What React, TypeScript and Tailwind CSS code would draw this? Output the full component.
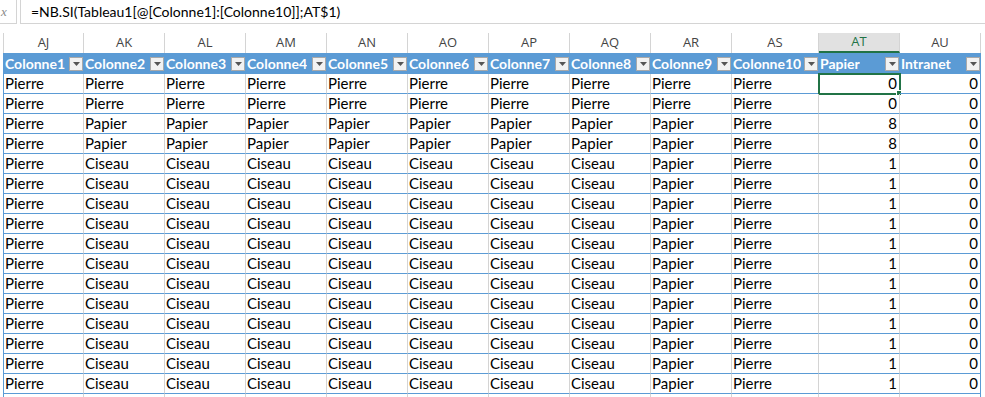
import React from "react";

const cols = [
  { id: "AJ", w: 80 },
  { id: "AK", w: 81 },
  { id: "AL", w: 81 },
  { id: "AM", w: 81 },
  { id: "AN", w: 81 },
  { id: "AO", w: 81 },
  { id: "AP", w: 81 },
  { id: "AQ", w: 81 },
  { id: "AR", w: 81 },
  { id: "AS", w: 87 },
  { id: "AT", w: 81 },
  { id: "AU", w: 81 },
];

const headers = [
  "Colonne1", "Colonne2", "Colonne3", "Colonne4", "Colonne5", "Colonne6",
  "Colonne7", "Colonne8", "Colonne9", "Colonne10", "Papier", "Intranet",
];

const pierreRow = [...Array(10).fill("Pierre"), "0", "0"];
const papierRow = ["Pierre", ...Array(8).fill("Papier"), "Pierre", "8", "0"];
const ciseauRow = ["Pierre", ...Array(7).fill("Ciseau"), "Papier", "Pierre", "1", "0"];

const rows: string[][] = [
  pierreRow,
  pierreRow,
  papierRow,
  papierRow,
  ...Array(12).fill(ciseauRow),
  Array(12).fill(""),
];

const font = { fontFamily: "Lato, 'Liberation Sans', sans-serif" };

function DropButton() {
  return (
    <div className="flex h-[14px] w-[14px] shrink-0 items-center justify-center border border-[#a9a9a9] bg-[#f2f2f2]">
      <svg width="7" height="4" viewBox="0 0 7 4">
        <path d="M0 0h7L3.5 4z" fill="#555" />
      </svg>
    </div>
  );
}

export default function App() {
  return (
    <div className="h-[397px] w-[985px] overflow-hidden bg-white" style={font}>
      {/* formula bar */}
      <div className="flex h-[24px]">
        <div className="flex w-[17px] items-center border-r border-b border-[#d4d4d4] pl-[1px]">
          <span
            className="text-[13px] italic leading-none text-[#8a8a8a]"
            style={{ fontFamily: "'Liberation Serif', serif" }}
          >
            x
          </span>
        </div>
        <div className="w-[3px]" />
        <div className="flex flex-1 items-center border-l border-b border-[#d4d4d4] pl-[10px] text-[14px] text-black">
          =NB.SI(Tableau1[@[Colonne1]:[Colonne10]];AT$1)
        </div>
      </div>

      <div className="h-[9px]" />

      {/* column letters */}
      <div className="flex h-[20px]">
        <div className="w-[4px] border-r border-[#d4d4d4]" />
        {cols.map((c) => (
          <div
            key={c.id}
            style={{ width: c.w, fontFamily: "'Open Sans', sans-serif" }}
            className={
              c.id === "AT"
                ? "flex items-center justify-center border-r border-b-2 border-r-[#d4d4d4] border-b-[#217346] bg-[#e1e1e1] text-[13px] text-[#217346]"
                : "flex items-center justify-center border-r border-[#d4d4d4] text-[13px] text-[#444]"
            }
          >
            {c.id}
          </div>
        ))}
      </div>

      {/* table header */}
      <div className="flex h-[21px]">
        <div className="w-[3px]" />
        <div className="flex border-l border-[#5b9bd5] bg-[#5b9bd5]">
          {cols.map((c, i) => (
            <div
              key={c.id}
              style={{ width: c.w }}
              className="flex items-center justify-between border-r border-[#5b9bd5] pl-[1px] text-[14px] font-bold text-white"
            >
              <span className="overflow-hidden whitespace-nowrap">{headers[i]}</span>
              <DropButton />
            </div>
          ))}
        </div>
      </div>

      {/* data rows */}
      {rows.map((r, ri) => (
        <div key={ri} className="flex h-[20px]">
          <div className="w-[3px]" />
          <div className="flex border-l border-[#5b9bd5]">
            {cols.map((c, ci) => {
              const num = ci >= 10;
              const last = ci === cols.length - 1;
              return (
                <div
                  key={c.id}
                  style={{ width: c.w }}
                  className={
                    "relative flex items-end whitespace-nowrap border-b border-b-[#5b9bd5] pb-[1px] text-[15px] leading-[18px] text-black " +
                    (last ? "border-r border-r-[#5b9bd5] " : "border-r border-r-[#d4d4d4] ") +
                    (num ? "justify-end pr-[2px]" : "pl-[1px]")
                  }
                >
                  {r[ci]}
                  {ri === 0 && c.id === "AT" && (
                    <>
                      <div className="pointer-events-none absolute -top-[1px] -left-[1px] h-[22px] w-[83px] border-2 border-[#217346]" />
                      <div className="absolute -right-[3px] bottom-[-3px] h-[6px] w-[6px] border border-white bg-[#217346]" />
                    </>
                  )}
                </div>
              );
            })}
          </div>
        </div>
      ))}
    </div>
  );
}
